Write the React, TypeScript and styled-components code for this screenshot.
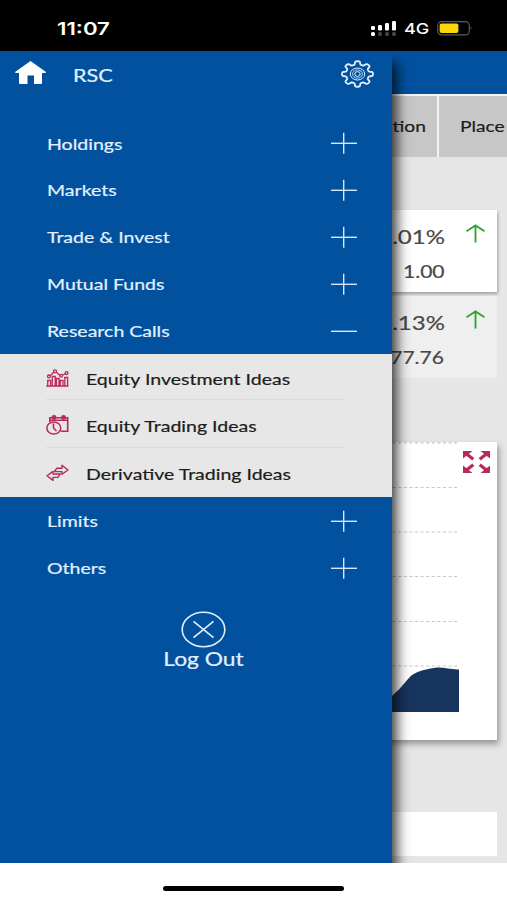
import React from "react";
import styled, { createGlobalStyle } from "styled-components";

const BLUE = "#02519f";
const CRIMSON = "#b92a5c";

const GlobalStyle = createGlobalStyle`
  *, *::before, *::after { box-sizing: border-box; }
  body { margin: 0; background: #fff; font-family: Lato, "Open Sans", sans-serif; }
  svg { display: block; flex: none; }
`;

const Screen = styled.div`
  width: 507px;
  height: 900px;
  display: flex;
  flex-direction: column;
  overflow: hidden;
  background: #fff;
`;

const Label = styled.span<{ $size: number; $stretch?: number; $origin?: "left" | "right" | "center" }>`
  display: block;
  flex: none;
  white-space: nowrap;
  line-height: 1.2;
  font-size: ${(p) => p.$size}px;
  -webkit-text-stroke: 0.2px currentColor;
  transform: scaleX(${(p) => p.$stretch ?? 1.2});
  transform-origin: ${(p) => p.$origin ?? "left"} center;
`;

const StatusBar = styled.header`
  height: 51px;
  flex: none;
  display: flex;
  align-items: center;
  justify-content: space-between;
  padding: 6px 34px 0 57px;
  background: #000;
  color: #fff;
  font-family: Inter, sans-serif;
`;

const Clock = styled(Label)`
  font-weight: 600;
  -webkit-text-stroke: 0;
`;

const StatusIcons = styled.div`
  display: flex;
  align-items: center;
`;

const Network = styled(Label)`
  width: 33px;
  margin-left: 7px;
  font-weight: 500;
  -webkit-text-stroke: 0;
`;

const Viewport = styled.div`
  position: relative;
  height: 812px;
  flex: none;
  overflow: hidden;
  background: #e6e6e6;
`;

const AppBar = styled.div`
  height: 43px;
  background: ${BLUE};
`;

const Tabs = styled.div`
  display: flex;
  justify-content: flex-end;
  gap: 2px;
  padding-top: 2px;
  background: #f4f4f4;
`;

const Tab = styled.div<{ $width: number; $indent?: number }>`
  display: flex;
  align-items: center;
  justify-content: ${(p) => (p.$indent ? "flex-start" : "flex-end")};
  width: ${(p) => p.$width}px;
  height: 61px;
  padding-bottom: 1px;
  padding-left: ${(p) => p.$indent ?? 0}px;
  padding-right: ${(p) => (p.$indent ? 0 : 11)}px;
  background: #c7c7c7;
  color: #1d1d1d;
`;

const Content = styled.main`
  display: flex;
  flex-direction: column;
  padding: 53px 10px 0 20px;
`;

const Quote = styled.section<{ $raised?: boolean }>`
  display: flex;
  justify-content: flex-end;
  height: 82px;
  margin-bottom: 4px;
  padding: 14px 11px 0 0;
  background: ${(p) => (p.$raised ? "#fff" : "#efefef")};
  box-shadow: ${(p) => (p.$raised ? "1px 2px 3px rgba(0, 0, 0, 0.3)" : "none")};
  color: #484848;
`;

const Figures = styled.div`
  display: flex;
  flex-direction: column;
  align-items: flex-end;
  gap: 13px;
  margin-right: 20.5px;
`;

const ChartCard = styled.section`
  display: flex;
  justify-content: flex-end;
  height: 298px;
  margin-top: 60px;
  padding-right: 7px;
  background: #fff;
  box-shadow: 2px 4px 6px rgba(0, 0, 0, 0.35);
`;

const ExpandButton = styled.button`
  width: 27px;
  height: 22px;
  margin: 9px 0 0 4px;
  padding: 0;
  border: 0;
  background: none;
`;

const BottomCard = styled.section`
  height: 44px;
  margin-top: 72px;
  background: #fff;
`;

const Drawer = styled.aside`
  position: absolute;
  inset: 0 auto 0 0;
  width: 391.5px;
  background: ${BLUE};
  color: #e3f1ff;
  box-shadow: 5px 12px 12px 0 rgba(0, 0, 0, 0.76);
`;

const DrawerTop = styled.div`
  display: flex;
  align-items: flex-start;
  height: 69px;
  padding: 9px 17px 0 14px;
`;

const UserName = styled(Label)`
  margin: 5px auto 0 26px;
`;

const MenuRow = styled.div`
  display: flex;
  align-items: center;
  justify-content: space-between;
  height: 46.8px;
  padding: 0 35px 0 47px;
`;

const MenuLabel = styled(Label)`
  padding-bottom: 0.6px;
`;

const SubMenu = styled.div`
  height: 143.5px;
  background: #e7e7e7;
  color: #1c1c1c;
`;

const SubRow = styled.div`
  display: flex;
  align-items: center;
  height: 48px;
  margin: 0 48px 0 46px;
  padding-top: 4px;
  gap: 17px;
  border-bottom: 1px solid #dadada;
  &:first-child { height: 46px; }
  &:last-child { border-color: transparent; }
`;

const SubLabel = styled(Label)`
  padding-top: 1px;
`;

const LogOut = styled.div`
  display: flex;
  flex-direction: column;
  align-items: center;
  width: 87px;
  margin: 20px 0 0 160px;
`;

const HomeArea = styled.footer`
  flex: 1;
  display: flex;
  justify-content: center;
  padding-top: 23px;
`;

const HomeIndicator = styled.div`
  width: 181px;
  height: 5px;
  border-radius: 3px;
  background: #000;
`;

const SignalIcon = () => (
  <svg width="27" height="17" viewBox="0 0 27 17">
    <g fill="#fff">
      <rect x="1" y="6" width="4" height="4" rx="1.2" />
      <rect x="8" y="5" width="4" height="5.5" rx="1.2" />
      <rect x="15" y="3" width="4" height="7.5" rx="1.2" />
      <rect x="22" y="1" width="4" height="9.5" rx="1.2" />
      <rect x="1" y="12" width="4" height="4" rx="1.6" />
    </g>
    <g fill="#444">
      <rect x="8" y="12" width="4" height="4" rx="1.6" />
      <rect x="15" y="12" width="4" height="4" rx="1.6" />
      <rect x="22" y="12" width="4" height="4" rx="1.6" />
    </g>
  </svg>
);

const BatteryIcon = () => (
  <svg width="36" height="15" viewBox="0 0 36 15">
    <rect x="0.7" y="0.7" width="31.6" height="13.2" rx="4" fill="none" stroke="#5b5b55" strokeWidth="1.2" />
    <rect x="2.6" y="2.5" width="18.8" height="9.6" rx="2" fill="#fcd60a" />
    <path d="M33.8 5q1.6 2.3 0 4.6z" fill="#777" />
  </svg>
);

const HomeIcon = () => (
  <svg width="33" height="25" viewBox="0 0 33 25">
    <path
      fill="#fff"
      d="M16.5 1 L32 12 Q32 13.2 30.5 13 L28 13 V23 Q28 24 27 24 H20 V15.5 H13.5 V24 H6 Q5 24 5 23 V13 H2.5 Q1 13.2 1 12 Z"
    />
  </svg>
);

const gearOutline = (() => {
  let d = "";
  const steps = 144;
  for (let i = 0; i < steps; i++) {
    const a = (i / steps) * Math.PI * 2;
    const wave = Math.tanh(2.6 * Math.cos(8 * a)) / Math.tanh(2.6);
    const r = 13.1 + 1.9 * wave;
    d += `${i ? "L" : "M"}${(17.5 + r * 1.03 * Math.cos(a)).toFixed(2)} ${(14 + r * 0.85 * Math.sin(a)).toFixed(2)}`;
  }
  return d + "Z";
})();

const GearIcon = () => (
  <svg width="35" height="28" viewBox="0 0 35 28" fill="none" stroke="#e0efff">
    <path d={gearOutline} strokeWidth="1.8" strokeLinejoin="round" />
    <ellipse cx="17.5" cy="14" rx="7.2" ry="6" strokeWidth="1" />
    <ellipse cx="17.5" cy="14" rx="4.9" ry="4.1" strokeWidth="0.8" />
    <ellipse cx="17.5" cy="14" rx="2.7" ry="2.4" strokeWidth="1" />
  </svg>
);

const ToggleIcon = ({ open }: { open?: boolean }) => (
  <svg width="26" height="22" viewBox="0 0 26 22" stroke="#d5e7f8" strokeWidth="1.4">
    <path d="M0 11.3H26" />
    {!open && <path d="M12.7 0.7V21.7" />}
  </svg>
);

const CandlesIcon = () => (
  <svg width="23" height="18" viewBox="0 0 23 18" fill="none" stroke={CRIMSON} strokeWidth="1.3">
    <path d="M0.3 17H22.5M1.7 17V11.5H4.6V17M6.3 17V7.5H9.2V17M10.4 17V9.5H13V17M14.2 17V11.5H17V17M18.8 17V8.5H21.6V17" />
    <path d="M4 7L8 3M10 3L14 6.5M16.5 6.2L19.5 4.5" />
    <circle cx="2.9" cy="7.4" r="1.4" />
    <circle cx="9" cy="2.3" r="1.5" />
    <circle cx="15.1" cy="6.7" r="1.4" />
    <circle cx="20.6" cy="4.1" r="1.4" />
  </svg>
);

const ScheduleIcon = () => (
  <svg width="23" height="20" viewBox="0 0 23 20" fill="none" stroke={CRIMSON} strokeWidth="1.6">
    <path d="M3.8 7V2.7H21.7V16.3H15M4 5.3H21.5" />
    <ellipse cx="8" cy="2.5" rx="1.7" ry="1.6" fill={CRIMSON} />
    <ellipse cx="17.5" cy="2.5" rx="1.7" ry="1.6" fill={CRIMSON} />
    <ellipse cx="7.8" cy="13" rx="7" ry="6" fill="#e7e7e7" />
    <path d="M7.5 8.5V13L10.5 16" />
  </svg>
);

const SwapIcon = () => (
  <svg width="23" height="18" viewBox="0 0 23 18" fill="none" stroke={CRIMSON} strokeWidth="1.4" strokeLinejoin="round">
    <path d="M8.5 7.3L11 4.2H16V1.3L22 6L16 10.3V7.6H8.5Z" />
    <path d="M14.2 9.8L12 13.4H7V16.4L1 11.7L7 7.4V10H14.2Z" />
  </svg>
);

const ArrowUpIcon = () => (
  <svg width="21" height="20" viewBox="0 0 21 20" fill="none" stroke="#2fa62f" strokeWidth="1.9">
    <path d="M10.5 18.5V2M1.5 7.2L10.5 1.4L19.5 7.2" />
  </svg>
);

const ExpandIcon = () => (
  <svg width="27" height="22" viewBox="0 0 27 22" fill={CRIMSON} stroke={CRIMSON}>
    <path stroke="none" d="M0 0H9.5L0 7.5ZM27 0H17.5L27 7.5ZM0 22H9.5L0 14.5ZM27 22H17.5L27 14.5Z" />
    <path strokeWidth="3.2" d="M3 2.5L10.3 8.2M24 2.5L16.7 8.2M3 19.5L10.3 13.8M24 19.5L16.7 13.8" />
  </svg>
);

const gridLines = [0.8, 45.5, 90, 134.5, 179.5, 224];

const AreaChart = () => (
  <svg width="100" height="298" viewBox="0 0 100 298">
    {gridLines.map((y) => (
      <path key={y} d={`M0 ${y}H98`} stroke="#c5c5c5" strokeWidth="1.2" strokeDasharray="3 2.6" />
    ))}
    <path
      d="M0 270V268C28 265 39 248 50 236C56 229 66 227.5 75 226C83 224.5 92 228 100 227.5V270Z"
      fill="#18355f"
    />
  </svg>
);

const LogOutIcon = () => (
  <svg width="45" height="37" viewBox="0 0 45 37" fill="none" stroke="#e0efff" strokeWidth="1.6">
    <ellipse cx="22.5" cy="18.5" rx="21.3" ry="17.3" />
    <path d="M12.5 10.3L32.5 26.7M32.5 10.3L12.5 26.7" />
  </svg>
);

const primaryItems = [
  { title: "Holdings" },
  { title: "Markets" },
  { title: "Trade & Invest" },
  { title: "Mutual Funds" },
  { title: "Research Calls", open: true },
];

const researchItems = [
  { title: "Equity Investment Ideas", icon: <CandlesIcon /> },
  { title: "Equity Trading Ideas", icon: <ScheduleIcon /> },
  { title: "Derivative Trading Ideas", icon: <SwapIcon /> },
];

const secondaryItems = [{ title: "Limits" }, { title: "Others" }];

const MenuItem = ({ title, open }: { title: string; open?: boolean }) => (
  <MenuRow>
    <MenuLabel $size={16} $stretch={1.22}>{title}</MenuLabel>
    <ToggleIcon open={open} />
  </MenuRow>
);

const quotes = [
  { change: ".01%", value: "1.00", raised: true },
  { change: ".13%", value: "77.76", raised: false },
];

export default function App() {
  return (
    <Screen>
      <GlobalStyle />
      <StatusBar>
        <Clock $size={17.5} $stretch={1.27}>11:07</Clock>
        <StatusIcons>
          <SignalIcon />
          <Network $size={15} $stretch={1.2}>4G</Network>
          <BatteryIcon />
        </StatusIcons>
      </StatusBar>
      <Viewport>
        <AppBar />
        <Tabs>
          <Tab $width={437}>
            <Label $size={16} $origin="right">tion</Label>
          </Tab>
          <Tab $width={68} $indent={21}>
            <Label $size={16}>Place</Label>
          </Tab>
        </Tabs>
        <Content>
          {quotes.map((q) => (
            <Quote key={q.value} $raised={q.raised}>
              <Figures>
                <Label $size={20} $origin="right">{q.change}</Label>
                <Label $size={18} $stretch={1.17} $origin="right">{q.value}</Label>
              </Figures>
              <ArrowUpIcon />
            </Quote>
          ))}
          <ChartCard>
            <AreaChart />
            <ExpandButton aria-label="Expand chart">
              <ExpandIcon />
            </ExpandButton>
          </ChartCard>
          <BottomCard />
        </Content>
        <Drawer>
          <DrawerTop>
            <HomeIcon />
            <UserName $size={18}>RSC</UserName>
            <GearIcon />
          </DrawerTop>
          <nav>
            {primaryItems.map((item) => (
              <MenuItem key={item.title} {...item} />
            ))}
            <SubMenu>
              {researchItems.map((item) => (
                <SubRow key={item.title}>
                  {item.icon}
                  <SubLabel $size={16} $stretch={1.22}>{item.title}</SubLabel>
                </SubRow>
              ))}
            </SubMenu>
            {secondaryItems.map((item) => (
              <MenuItem key={item.title} {...item} />
            ))}
          </nav>
          <LogOut>
            <LogOutIcon />
            <Label $size={19} $origin="center">Log Out</Label>
          </LogOut>
        </Drawer>
      </Viewport>
      <HomeArea>
        <HomeIndicator />
      </HomeArea>
    </Screen>
  );
}
